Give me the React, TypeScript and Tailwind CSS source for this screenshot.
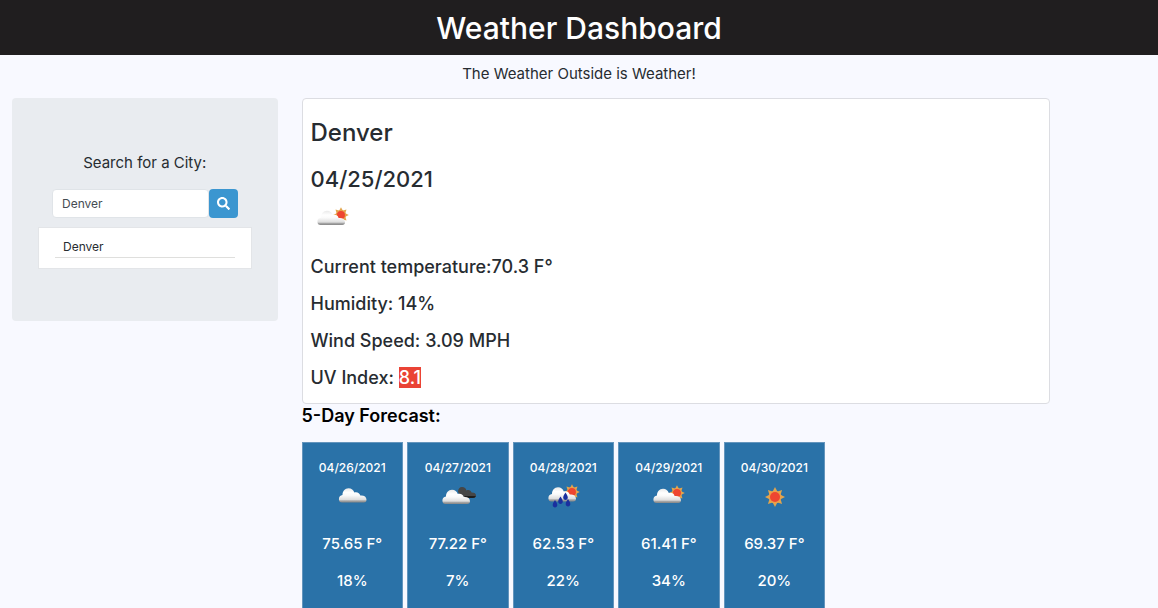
import { useState } from "react";
import { FaSearch } from "react-icons/fa";

type Kind = "cloud" | "clouds" | "rain" | "partly" | "sun";

const forecast: { date: string; kind: Kind; temp: string; humidity: string }[] = [
  { date: "04/26/2021", kind: "cloud", temp: "75.65 F°", humidity: "18%" },
  { date: "04/27/2021", kind: "clouds", temp: "77.22 F°", humidity: "7%" },
  { date: "04/28/2021", kind: "rain", temp: "62.53 F°", humidity: "22%" },
  { date: "04/29/2021", kind: "partly", temp: "61.41 F°", humidity: "34%" },
  { date: "04/30/2021", kind: "sun", temp: "69.37 F°", humidity: "20%" },
];

const cloudPath =
  "M3.500 15.500C1.500 15.500 .4 14.200 .4 12.200C.4 9.800 1.800 8.300 4 8C3.900 4.200 6.400 1.200 10 1.200C13 1.200 15 3 15.800 5.400C18.800 4.600 21.200 6 21.800 8.600C25.300 8.200 28 9.800 28 12.800C28 14.600 27 15.500 25.300 15.500Z";

function Cloud({ id, transform }: { id: string; transform?: string }) {
  return (
    <g transform={transform}>
      <defs>
        <linearGradient id={id} x1="0" y1="0" x2="0" y2="1">
          <stop offset="0" stopColor="#e9e9e9" />
          <stop offset="0.3" stopColor="#ffffff" />
          <stop offset="0.5" stopColor="#fafafa" />
          <stop offset="0.8" stopColor="#dedede" />
          <stop offset="0.88" stopColor="#a8a8a8" />
          <stop offset="1" stopColor="#858585" />
        </linearGradient>
      </defs>
      <path d={cloudPath} fill={`url(#${id})`} />
    </g>
  );
}

function Sun({ cx, cy, r }: { cx: number; cy: number; r: number }) {
  const rays = Array.from({ length: 8 }, (_, i) => i * 45);
  return (
    <g transform={`translate(${cx} ${cy}) scale(${r / 9})`}>
      {rays.map((a) => (
        <path key={a} d="M-2.600 -5L0 -10L2.600 -5Z" fill="#e3a54c" transform={`rotate(${a})`} />
      ))}
      <circle r="6.300" fill="#e9a04a" />
      <circle r="5" fill="#ee4630" />
    </g>
  );
}

function WeatherIcon({ kind, id }: { kind: Kind; id: string }) {
  return (
    <svg viewBox="0 0 44 28" className="h-7 w-11" aria-hidden="true">
      {kind === "cloud" && <Cloud id={id} transform="translate(8.500 4)" />}
      {kind === "clouds" && (
        <>
          <path
            d="M22 9C22 6 23.500 4 26 4C28.500 4 30 5.500 30.400 7.500C33 6.500 35 7.500 35.500 9.500C38.500 9.400 40 10.500 40 12.500C40 14 39 15 37 15H26Z"
            fill="#464646"
          />
          <path d="M29 13H39.800C39.400 14.300 38.500 15 37 15H29Z" fill="#1d1d1d" />
          <Cloud id={id} transform="translate(6 5.500)" />
        </>
      )}
      {kind === "partly" && (
        <>
          <Sun cx={30} cy={10} r={7} />
          <Cloud id={id} transform="translate(6 4.500)" />
          <path d="M26.500 8.500C28 6 32 6.200 33.300 9C33.800 11 33.300 12.300 32 13C30.500 12.600 29 12.500 27.600 12.700C27.500 10.500 26.800 9.500 25.500 9Z" fill="#ee4630" />
        </>
      )}
      {kind === "rain" && (
        <>
          <Sun cx={31} cy={9} r={7} />
          <Cloud id={id} transform="translate(7 3)" />
          <path d="M27 7.500C29 5 33 5.500 34.300 8C34.800 10 34.300 11 33 11.800C31.500 10.800 30 10.500 28.600 10.700C28.500 9 27.500 8.500 26 8Z" fill="#ee4630" />
          {[
            [14, 21],
            [19.5, 17.5],
            [24.5, 13.5],
            [27, 20],
          ].map(([x, y]) => (
            <path
              key={x}
              d="M0 -4C1 -2 2.300 -.8 2.300 1C2.300 2.500 1.300 3.500 0 3.500C-1.300 3.500 -2.300 2.500 -2.300 1C-2.300 -.8 -1 -2 0 -4Z"
              transform={`translate(${x} ${y})`}
              fill="#1a2f9e"
            />
          ))}
        </>
      )}
      {kind === "sun" && <Sun cx={23} cy={14} r={9} />}
    </svg>
  );
}

export default function App() {
  const [city, setCity] = useState("Denver");
  return (
    <div className="min-h-screen bg-[#f8f9ff] font-['Inter',sans-serif] text-[#272c31]">
      <header className="bg-[#201e1f] pt-2 pb-[7px] text-center text-white">
        <h1 className="text-[30px] leading-10 font-medium">Weather Dashboard</h1>
      </header>
      <p className="pt-[7px] pb-3 text-center text-[15px] leading-6">The Weather Outside is Weather!</p>

      <div className="flex items-start">
        <aside className="w-1/4 px-3">
          <div className="rounded bg-[#e9ecf0] px-[26px] pt-[53px] pb-[52px]">
            <form onSubmit={(e) => e.preventDefault()} className="px-[14px]">
              <label htmlFor="city" className="block text-center text-[15px] leading-6">
                Search for a City:
              </label>
              <div className="mt-[14px] flex">
                <input
                  id="city"
                  type="text"
                  value={city}
                  onChange={(e) => setCity(e.target.value)}
                  className="h-[29px] min-w-0 flex-1 rounded border border-[#e0e4e8] bg-white px-[9px] text-xs text-[#454c53]"
                />
                <button
                  type="submit"
                  aria-label="Search"
                  className="flex h-[29px] w-[29px] items-center justify-center rounded bg-[#3b96d0] text-white"
                >
                  <FaSearch className="size-[13px]" />
                </button>
              </div>
            </form>
            <ul className="mt-[9px] border border-[#e3e5e8] bg-white px-4 pt-[9px] pb-[10px]">
              <li className="border-b border-[#dfdfdd] px-2 text-xs leading-5">Denver</li>
            </ul>
          </div>
        </aside>

        <main className="w-2/3 px-3">
          <section className="rounded border border-[#dcdde2] bg-white px-2 pt-[18px] pb-[13px] font-medium">
            <h2 className="text-2xl leading-8">Denver</h2>
            <h3 className="mt-[14px] text-[22px] leading-8">04/25/2021</h3>
            <div className="mt-2.5">
              <WeatherIcon kind="partly" id="today" />
            </div>
            <div className="mt-[22px] text-lg leading-6">
              <p>Current temperature:70.3 F°</p>
              <p className="mt-[13px]">Humidity: 14%</p>
              <p className="mt-[13px]">Wind Speed: 3.09 MPH</p>
              <p className="mt-[13px]">
                UV Index: <span className="bg-[#ea4335] text-white">8.1</span>
              </p>
            </div>
          </section>

          <h2 className="text-lg leading-6 font-semibold text-black">5-Day Forecast:</h2>
          <div className="mt-[14px] grid w-[70%] grid-cols-5 gap-1">
            {forecast.map((day) => (
              <article
                key={day.date}
                className="border border-[#6495bd] bg-[#2a72a8] pt-[15px] pb-8 text-center text-white"
              >
                <h3 className="text-xs leading-5 font-medium">{day.date}</h3>
                <div className="mt-[5px] flex justify-center">
                  <WeatherIcon kind={day.kind} id={`icon-${day.kind}`} />
                </div>
                <p className="mt-[21px] text-[15px] leading-6 font-medium">{day.temp}</p>
                <p className="mt-[13px] text-[15px] leading-6 font-medium">{day.humidity}</p>
              </article>
            ))}
          </div>
        </main>
      </div>
    </div>
  );
}
